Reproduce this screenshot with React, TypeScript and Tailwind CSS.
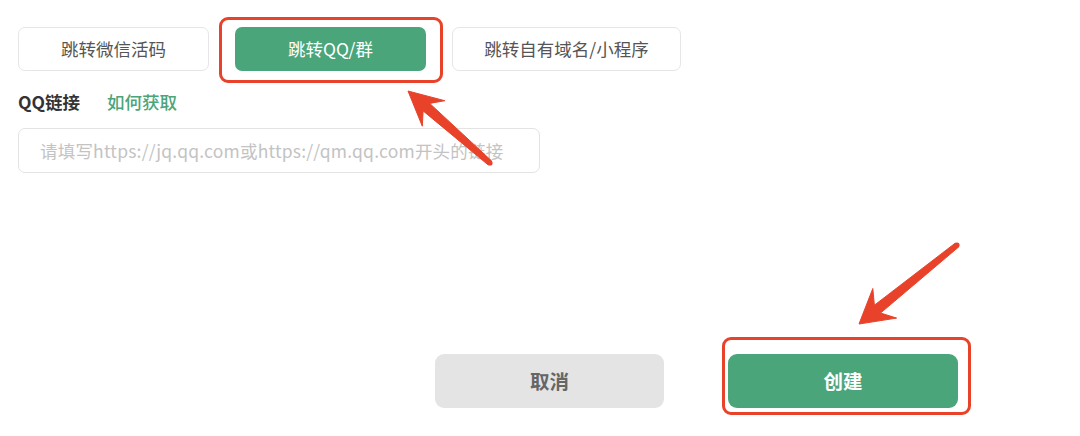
type Pt = [number, number];

// tapered arrow with swept-back head, pointing from tail to tip
function arrowPoints(tip: Pt, tail: Pt, headLen: number, headHalf: number) {
  const dx = tail[0] - tip[0];
  const dy = tail[1] - tip[1];
  const len = Math.hypot(dx, dy);
  const u: Pt = [dx / len, dy / len];
  const n: Pt = [-u[1], u[0]];
  const at = (a: number, b: number): string =>
    `${(tip[0] + u[0] * a + n[0] * b).toFixed(1)},${(tip[1] + u[1] * a + n[1] * b).toFixed(1)}`;
  const notch = headLen * 0.72;
  const pts = [
    at(0, 0),
    at(headLen, headHalf),
    at(notch, 5),
    at(len, 2.6),
    at(len, -2.6),
    at(notch, -5),
    at(headLen, -headHalf),
  ];
  return pts.join(" ");
}

function Arrows() {
  return (
    <svg
      className="pointer-events-none absolute inset-0"
      width={1080}
      height={436}
      viewBox="0 0 1080 436"
    >
      <g fill="#e8432a" stroke="#e8432a" strokeWidth={1} strokeLinejoin="round">
        <polygon points={arrowPoints([408, 91], [490, 163], 34, 17)} />
        <circle cx={490} cy={163} r={2.6} stroke="none" />
        <polygon points={arrowPoints([859, 324], [957, 245], 33, 19)} />
        <circle cx={957} cy={245} r={2.6} stroke="none" />
      </g>
    </svg>
  );
}

function TabButton({ label, active, width }: { label: string; active?: boolean; width: string }) {
  return (
    <button
      type="button"
      className={
        "flex h-[44px] items-center justify-center rounded-[7px] text-[17.5px] " +
        width +
        " " +
        (active ? "bg-[#4aa57b] text-white" : "border border-[#e6e6e6] bg-white text-[#555]")
      }
    >
      {label}
    </button>
  );
}

export default function App() {
  return (
    <div className="relative h-[436px] w-[1080px] overflow-hidden bg-white font-['Noto_Sans_CJK_SC','Noto_Sans',sans-serif]">
      <div className="pl-[18px] pt-[27px]">
        <div className="flex gap-[26px]">
          <TabButton label="跳转微信活码" width="w-[191px]" />
          <span className="relative">
            <TabButton label="跳转QQ/群" width="w-[191px]" active />
            <span className="absolute -left-[16px] -right-[17px] -top-[10px] -bottom-[12px] rounded-[9px] border-[3px] border-[#e8432a]" />
          </span>
          <TabButton label="跳转自有域名/小程序" width="w-[229px]" />
        </div>

        <div className="mt-[19px] flex h-[24px] items-center text-[17.5px] leading-none">
          <span className="font-semibold text-[#333]">QQ链接</span>
          <span className="ml-[27px] font-medium text-[#4aa57b]">如何获取</span>
        </div>

        <input
          className="mt-[14px] block h-[45px] w-[522px] rounded-[7px] border border-[#e3e3e3] pl-[21px] text-[17.5px] tracking-[0.2px] outline-none placeholder:text-[#c3c3c3]"
          placeholder="请填写https://jq.qq.com或https://qm.qq.com开头的链接"
        />

        <div className="ml-[417px] mt-[181px] flex gap-[64px]">
          <button
            type="button"
            className="flex h-[54px] w-[229px] items-center justify-center rounded-[9px] bg-[#e4e4e4] text-[19.5px] font-semibold text-[#666]"
          >
            取消
          </button>
          <span className="relative">
            <button
              type="button"
              className="flex h-[54px] w-[230px] items-center justify-center rounded-[9px] bg-[#4aa57b] text-[19.5px] font-semibold text-white"
            >
              创建
            </button>
            <span className="absolute -left-[6px] -right-[13px] -top-[17px] -bottom-[7px] rounded-[9px] border-[3px] border-[#e8432a]" />
          </span>
        </div>
      </div>
      <Arrows />
    </div>
  );
}
